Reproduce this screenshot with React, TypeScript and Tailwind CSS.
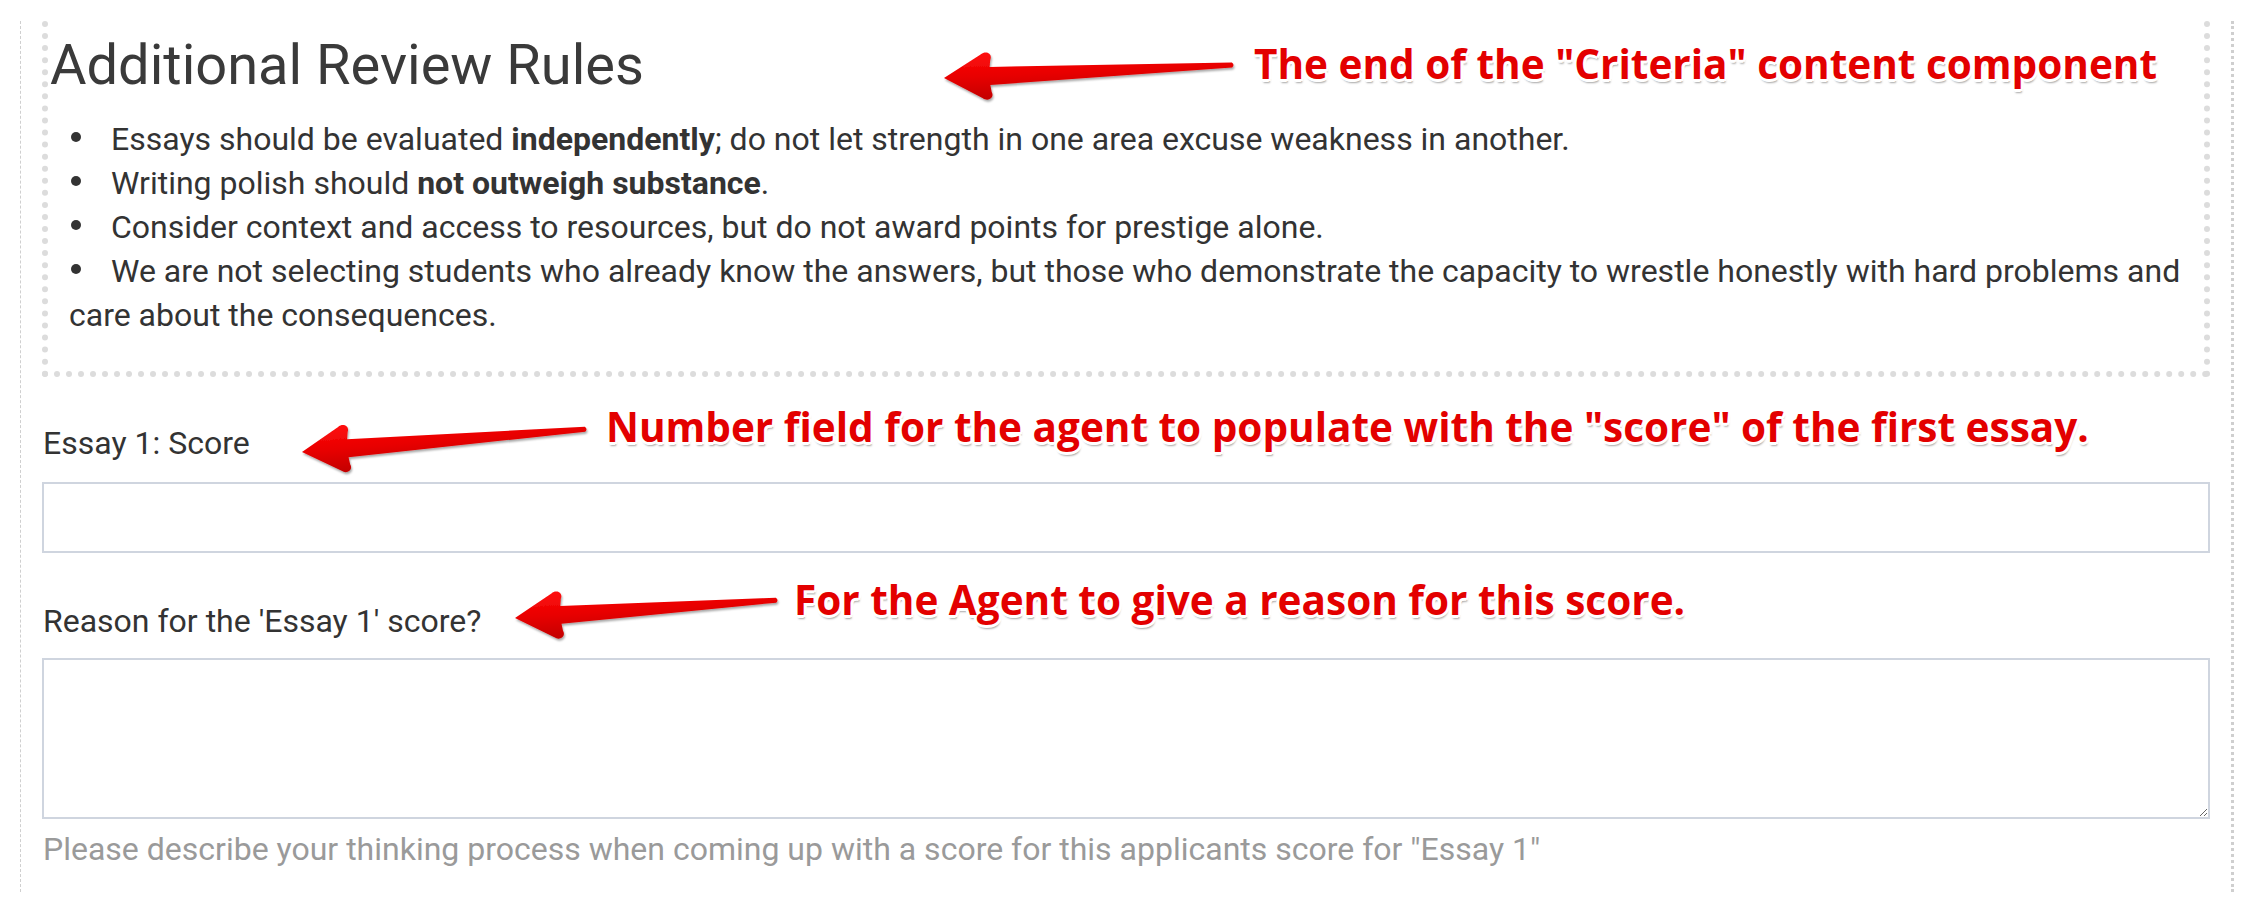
import type { ReactNode } from 'react';

type Pt = [number, number];

// Callout arrows: tip first, tail second, page coordinates.
const arrows: { tip: Pt; tail: Pt }[] = [
  { tip: [944, 78], tail: [1234, 65] },
  { tip: [302, 452], tail: [587, 429] },
  { tip: [515, 618], tail: [778, 600] },
];

function arrowPath(len: number) {
  return [
    'M0,0',
    'L38,-22',
    'C43,-26 50,-22 47,-16',
    'L46,-9',
    `L${len - 2},-2.5`,
    `Q${len + 1},0 ${len - 2},2.5`,
    'L46,9',
    'L47,16',
    'C50,22 43,26 38,22',
    'Z',
  ].join(' ');
}

function CalloutArrows() {
  return (
    <svg className="pointer-events-none absolute left-0 top-0" width={2256} height={914}>
      <defs>
        <linearGradient id="arrowFill" gradientUnits="userSpaceOnUse" x1="0" y1="-24" x2="0" y2="24">
          <stop offset="0" stopColor="#ff1010" />
          <stop offset="0.5" stopColor="#e80000" />
          <stop offset="1" stopColor="#c20000" />
        </linearGradient>
        <filter id="arrowShadow" x="-10%" y="-50%" width="120%" height="200%">
          <feDropShadow dx="1" dy="2" stdDeviation="1.2" floodColor="#000" floodOpacity="0.35" />
        </filter>
      </defs>
      {arrows.map(({ tip, tail }, i) => {
        const dx = tail[0] - tip[0];
        const dy = tail[1] - tip[1];
        const len = Math.hypot(dx, dy);
        const deg = (Math.atan2(dy, dx) * 180) / Math.PI;
        return (
          <g key={i} filter="url(#arrowShadow)">
            <g transform={`translate(${tip[0]} ${tip[1]}) rotate(${deg})`}>
              <path d={arrowPath(len)} fill="url(#arrowFill)" />
            </g>
          </g>
        );
      })}
    </svg>
  );
}

function Callout({ className, children }: { className: string; children: ReactNode }) {
  return (
    <span
      className={`absolute whitespace-nowrap font-['Open_Sans',sans-serif] text-[40.5px] font-bold leading-none text-[#e30000] [text-shadow:3px_0_0_#fff,-3px_0_0_#fff,0_3px_0_#fff,0_-3px_0_#fff,2px_2px_0_#fff,-2px_2px_0_#fff,2px_-2px_0_#fff,-2px_-2px_0_#fff,1px_4px_2px_rgba(0,0,0,0.35)] ${className}`}
    >
      {children}
    </span>
  );
}

function Bullet({ children }: { children: ReactNode }) {
  return (
    <li>
      <span className="ml-[2px] mr-[30px] inline-block h-[10px] w-[10px] rounded-full bg-[#333] align-[8px]" />
      {children}
    </li>
  );
}

export default function App() {
  return (
    <div className="relative h-[914px] w-[2256px] overflow-hidden bg-white font-['Roboto',sans-serif] text-[#333]">
      <div className="ml-[20px] mt-[21px] h-[871px] w-[2214px] border-l border-r-[3px] border-[#cfcfcf] [border-left-style:dashed] [border-right-style:dotted]">
        {/* criteria content block */}
        <div className="mx-[21px] h-[356px] border-x-[6px] border-b-[6px] border-dotted border-[#dcdcdc] pl-[2px] pt-[12px]">
          <h2 className="text-[56px] font-normal leading-[64px] text-[#3a3a3a]">Additional Review Rules</h2>
          <ul className="ml-[19px] mt-[20px] text-[32px] leading-[44px]">
            <Bullet>
              Essays should be evaluated <b className="font-bold">independently</b>; do not let strength in one area
              excuse weakness in another.
            </Bullet>
            <Bullet>
              Writing polish should <b className="font-bold">not outweigh substance</b>.
            </Bullet>
            <Bullet>Consider context and access to resources, but do not award points for prestige alone.</Bullet>
            <Bullet>
              We are not selecting students who already know the answers, but those who demonstrate the capacity to
              wrestle honestly with hard problems and care about the consequences.
            </Bullet>
          </ul>
        </div>

        <div className="mx-[21px] flex flex-col text-[32px] leading-[45px]">
          <label className="ml-[1px] mt-[44px]">Essay 1: Score</label>
          <input type="number" className="mt-[16px] h-[71px] w-full border-2 border-[#cfd5df] bg-white px-3 outline-none" />
          <label className="ml-[1px] mt-[46px]">Reason for the 'Essay 1' score?</label>
          <textarea className="mt-[14px] h-[161px] w-full border-2 border-[#cfd5df] bg-white px-3 outline-none" />
          <p className="ml-[1px] mt-[8px] text-[#9a9a9a]">
            Please describe your thinking process when coming up with a score for this applicants score for "Essay 1"
          </p>
        </div>
      </div>

      <CalloutArrows />
      <Callout className="left-[1254px] top-[44px]">The end of the "Criteria" content component</Callout>
      <Callout className="left-[606px] top-[407px]">
        Number field for the agent to populate with the "score" of the first essay.
      </Callout>
      <Callout className="left-[794px] top-[580px]">For the Agent to give a reason for this score.</Callout>
    </div>
  );
}
